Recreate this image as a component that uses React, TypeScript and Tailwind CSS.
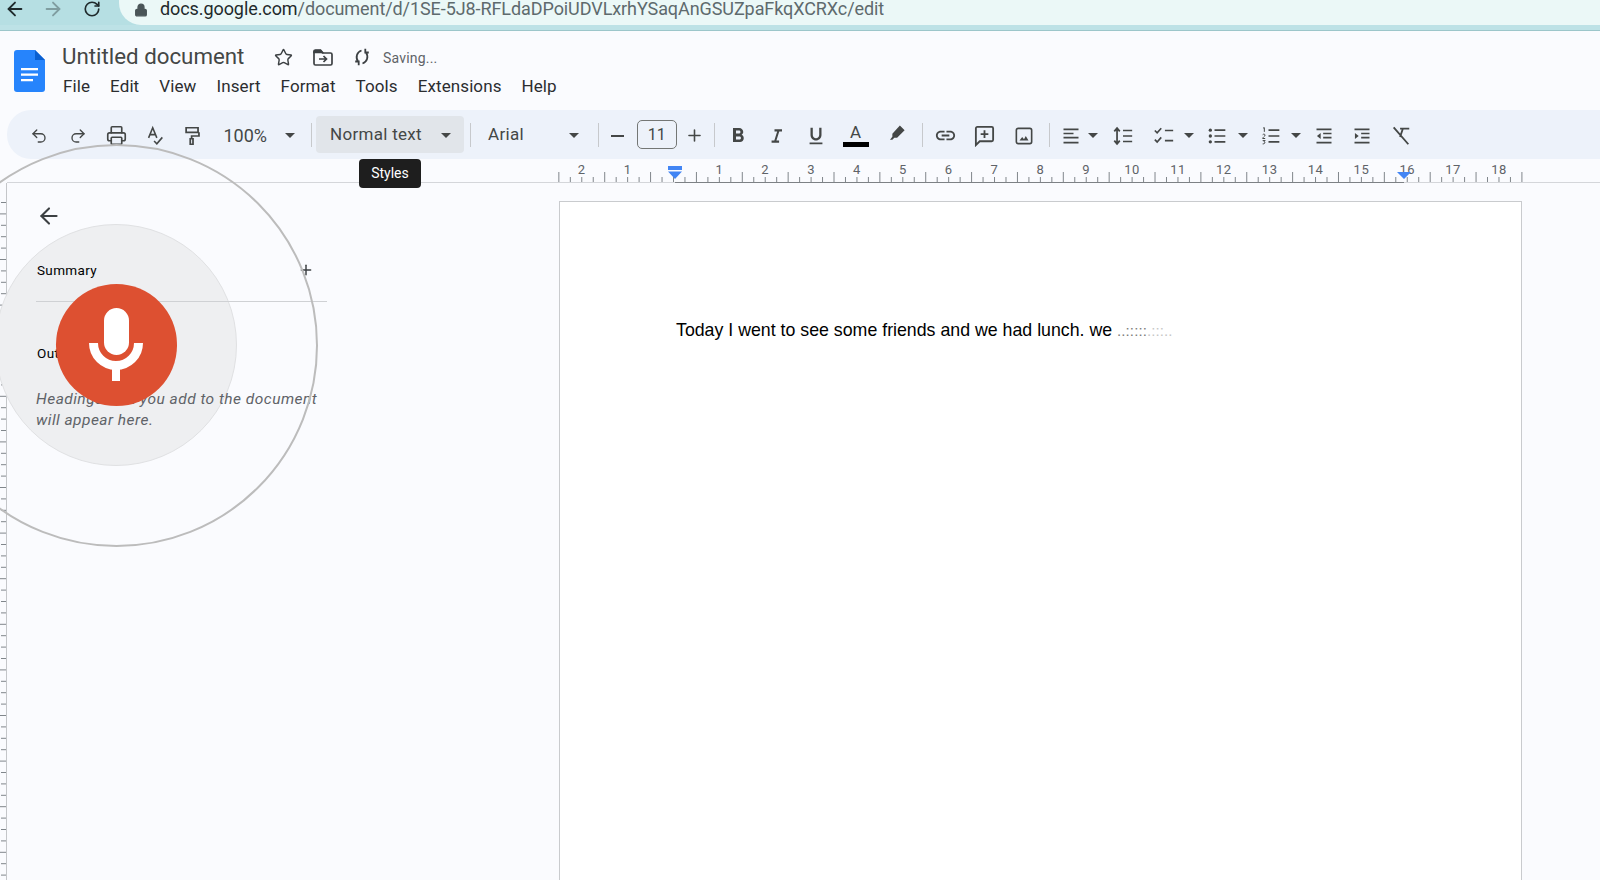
import { ArrowLeft, ArrowRight, Lock, Plus, Printer, Redo2, RotateCw, Star, Undo2 } from "lucide-react";
import type { ReactNode } from "react";

const ZERO = 673.5;
const INCH = 45.86;
const rulerNumbers = [-2, -1, 1, 2, 3, 4, 5, 6, 7, 8, 9, 10, 11, 12, 13, 14, 15, 16, 17, 18];
const rulerTicks = Array.from({ length: 85 }, (_, i) => i);
const sideTicks = Array.from({ length: 62 }, (_, i) => i);
const menu = ["File", "Edit", "View", "Insert", "Format", "Tools", "Extensions", "Help"];

const Cell = ({ className, children }: { className: string; children: ReactNode }) => (
  <span className={`flex shrink-0 translate-y-px items-center justify-center ${className}`}>{children}</span>
);

const Caret = () => (
  <svg width="10" height="5" viewBox="0 0 10 5" className="text-[#444746]">
    <path d="M0 0h10L5 5z" fill="currentColor" />
  </svg>
);

const Sep = ({ className }: { className: string }) => <span className={`h-[24px] w-px shrink-0 bg-[#c7c9cc] ${className}`} />;

const Icon = ({ size = 20, children }: { size?: number; children: ReactNode }) => (
  <svg width={size} height={size} viewBox="0 0 24 24" fill="none" stroke="#444746" strokeWidth="2" className="block">
    {children}
  </svg>
);

const DocsLogo = () => (
  <svg width="31" height="42" viewBox="0 0 31 42" className="block">
    <path d="M3 0h18l10 10v29a3 3 0 0 1-3 3H3a3 3 0 0 1-3-3V3a3 3 0 0 1 3-3z" fill="#2684fc" />
    <path d="M21 0l10 10H21z" fill="#0a5fd0" />
    <path d="M7 18h17v2.2H7zM7 23.5h17v2.2H7zM7 29h12v2.2H7z" fill="#fff" />
  </svg>
);

const Ruler = () => (
  <svg width="1600" height="24" className="block shrink-0">
    <line x1="7" y1="23.5" x2="1600" y2="23.5" stroke="#d4d6da" />
    <line x1="675" y1="23.5" x2="1404" y2="23.5" stroke="#7d8185" />
    {rulerTicks.map((i) => {
      const x = ZERO + (i / 4 - 2.5) * INCH;
      const long = i % 4 === 0;
      return <line key={i} x1={x} x2={x} y1={long ? 13 : 18} y2="23" stroke="#80868b" />;
    })}
    {rulerNumbers.map((n) => (
      <text key={n} x={ZERO + n * INCH} y="15" textAnchor="middle" fontSize="13" letterSpacing="0.5" fill="#5f6368" fontFamily="Roboto, sans-serif" stroke="#fafbfe" strokeWidth="2" paintOrder="stroke">
        {Math.abs(n)}
      </text>
    ))}
    <path d="M668 7h14v4h-14zM668 12.5h14L675 20zM1397 13h14l-7 7z" fill="#4285f4" />
  </svg>
);

const SideRuler = () => (
  <svg width="7" height="697" className="block shrink-0">
    <line x1="6.5" y1="0" x2="6.5" y2="697" stroke="#c4c6c9" />
    {sideTicks.map((i) => (
      <line key={i} x1={i % 4 === 1 ? 0 : 1} x2="6" y1={19.5 + i * 11.4} y2={19.5 + i * 11.4} stroke="#80868b" />
    ))}
  </svg>
);

export default function App() {
  return (
    <div className="relative flex h-[880px] w-[1600px] flex-col overflow-hidden bg-[#fafbfe] font-['Roboto',sans-serif] text-[#3c4043]">
      {/* Browser bar */}
      <div className="h-[31px] shrink-0 border-b border-[#9cc6ca] bg-[#bde2e6]">
        <div className="flex h-[25px] items-center bg-[#b6dfe3]">
          <ArrowLeft size={22} strokeWidth={2} className="ml-[4px] shrink-0 -translate-y-[4px] text-[#1f2a2c]" />
          <ArrowRight size={22} strokeWidth={2} className="ml-[16px] shrink-0 -translate-y-[4px] text-[#7f9da0]" />
          <RotateCw size={18} strokeWidth={2.2} className="ml-[19px] shrink-0 -translate-y-[4px] text-[#1f2a2c]" />
          <div className="ml-[18px] flex h-[25px] flex-1 items-center rounded-bl-[22px] bg-[#ebf8f7] pl-[15px]">
            <Lock size={14} fill="#4a5558" strokeWidth={2.4} className="shrink-0 -translate-y-[3px] text-[#4a5558]" />
            <span className="ml-[12px] -translate-y-[4px] whitespace-nowrap text-[18px] leading-[16px] tracking-[-0.08px] text-[#5e6a6d]">
              <span className="text-[#1f2a2c]">docs.google.com</span>/document/d/1SE-5J8-RFLdaDPoiUDVLxrhYSaqAnGSUZpaFkqXCRXc/edit
            </span>
          </div>
        </div>
      </div>

      {/* Title and menu */}
      <div className="flex h-[79px] shrink-0">
        <div className="ml-[14px] mt-[19px]">
          <DocsLogo />
        </div>
        <div className="ml-[17px]">
          <div className="mt-[14px] flex h-[24px] items-center">
            <span className="w-[183px] -translate-y-px whitespace-nowrap text-[22.3px] leading-[24px] text-[#444746]">Untitled document</span>
            <Star size={19} strokeWidth={1.8} className="ml-[29px] shrink-0 text-[#3c4043]" />
            <span className="ml-[20px] shrink-0">
              <svg width="20" height="17" viewBox="0 0 20 17" fill="none" stroke="#3c4043" strokeWidth="1.7" className="block">
                <path d="M1 2.500A1.500 1.500 0 0 1 2.500 1h5L9.500 3.500H1z" fill="#3c4043" />
                <path d="M1 3a1.500 1.500 0 0 1 1.500-1.500h5L9.500 4H17.500A1.500 1.500 0 0 1 19 5.500v9a1.500 1.500 0 0 1-1.500 1.500h-15A1.500 1.500 0 0 1 1 14.500z" />
                <path d="M6 10h7M10.500 7l3 3-3 3" />
              </svg>
            </span>
            <span className="ml-[21px] shrink-0">
              <svg width="16" height="18" viewBox="0 0 16 18" fill="none" stroke="#3c4043" strokeWidth="1.8" className="block">
                <path d="M7.500 2.500C3 4 1 9 4.200 14M1.200 13.500h3.500v3.800" />
                <path d="M8.500 15.500C13 14 15 9 11.800 4M14.800 4.500h-3.500V.7" />
              </svg>
            </span>
            <span className="ml-[13px] translate-y-px text-[14px] tracking-[0.2px] text-[#5f6368]">Saving...</span>
          </div>
          <div className="mt-[6px] flex h-[24px] items-center gap-[20px] pl-[1px] text-[17px] tracking-[0.1px] text-[#2b2d30]">
            {menu.map((m) => (
              <span key={m}>{m}</span>
            ))}
          </div>
        </div>
      </div>

      {/* Toolbar */}
      <div className="ml-[7px] flex h-[49px] shrink-0 items-center rounded-l-[24px] bg-[#edf2fa] pl-[13px] text-[#444746]">
        <Cell className="w-[38.5px]"><Undo2 size={18} strokeWidth={1.8} /></Cell>
        <Cell className="w-[38.5px]"><Redo2 size={18} strokeWidth={1.8} /></Cell>
        <Cell className="w-[38.5px]"><Printer size={21} strokeWidth={1.9} /></Cell>
        <Cell className="w-[38.5px]">
          <Icon size={22}>
            <path d="M5 14 9.500 3 14 14M6.500 10.500h6M11 17.500l3 3 6-7" strokeWidth="1.700" />
          </Icon>
        </Cell>
        <Cell className="w-[38.5px]">
          <Icon size={22}>
            <path d="M6 3h13v5H6zM12 8h8M20 8v4h-8v3M10.500 15h3v6h-3z" transform="translate(-1.500 0)" strokeWidth="1.900" />
          </Icon>
        </Cell>
        <span className="ml-[11px] w-[56.5px] shrink-0 translate-y-px text-[18px]">100%</span>
        <Cell className="w-[20px]"><Caret /></Cell>
        <Sep className="ml-[11px]" />
        <div className="ml-[4px] flex h-[37px] w-[148px] shrink-0 items-center rounded-[4px] bg-[#e1e5ea] pl-[14px] text-[17px] tracking-[0.3px]">
          <span className="w-[106px]">Normal text</span>
          <Cell className="w-[20px]"><Caret /></Cell>
        </div>
        <Sep className="ml-[6px]" />
        <span className="ml-[17px] w-[76px] shrink-0 text-[17px] tracking-[0.3px]">Arial</span>
        <Cell className="w-[20px]"><Caret /></Cell>
        <Sep className="ml-[14px]" />
        <Cell className="ml-[8px] w-[20px]"><span className="h-[2px] w-[13px] bg-[#444746]" /></Cell>
        <span className="ml-[9.5px] flex h-[29px] w-[40.5px] shrink-0 items-center justify-center rounded-[5px] border border-[#747775] text-[16px]">11</span>
        <Cell className="ml-[7px] w-[20px]"><Plus size={19} strokeWidth={2} /></Cell>
        <Sep className="ml-[10px]" />
        <Cell className="ml-[4px] w-[38.5px]">
          <svg width="24" height="24" viewBox="0 0 24 24" fill="#444746"><path d="M15.600 10.790c.97-.67 1.650-1.770 1.650-2.790 0-2.260-1.750-4-4-4H7v14h7.040c2.090 0 3.710-1.700 3.710-3.790 0-1.520-.86-2.820-2.150-3.420zM10 6.500h3c.83 0 1.500.67 1.500 1.500s-.67 1.500-1.500 1.500h-3v-3zm3.500 9H10v-3h3.500c.83 0 1.500.67 1.500 1.500s-.67 1.500-1.500 1.500z" /></svg>
        </Cell>
        <Cell className="w-[39px]">
          <svg width="20" height="24" viewBox="0 0 24 24" fill="#444746"><path d="M9 4v2.500h3.200L8.800 17.500H5.500V20h9v-2.500h-3.200l3.400-11H18V4z" /></svg>
        </Cell>
        <Cell className="w-[39px]">
          <svg width="22" height="22" viewBox="0 0 24 24" fill="#444746"><path d="M12 17c3.310 0 6-2.690 6-6V3h-2.500v8c0 1.930-1.570 3.500-3.500 3.500S8.500 12.930 8.500 11V3H6v8c0 3.310 2.690 6 6 6zm-7 2v2h14v-2H5z" /></svg>
        </Cell>
        <Cell className="w-[40px]">
          <span className="flex w-[26px] flex-col items-center">
            <span className="text-[17px] leading-[17px] text-[#444746]">A</span>
            <span className="mt-[1px] h-[5px] w-[26px] bg-black" />
          </span>
        </Cell>
        <Cell className="ml-[2px] w-[39px]">
          <svg width="19" height="19" viewBox="0 0 24 24" className="block -translate-y-[3px]"><path d="M15 3l6 6-9.500 9.500H8L5.500 21H2.500l3-3.500V13.500z" fill="#444746" /></svg>
        </Cell>
        <Sep className="ml-[5px]" />
        <Cell className="ml-[4px] w-[38.5px]">
          <svg width="23" height="23" viewBox="0 0 24 24" fill="#444746"><path d="M3.900 12c0-1.710 1.390-3.100 3.100-3.100h4V7H7c-2.760 0-5 2.240-5 5s2.240 5 5 5h4v-1.900H7c-1.710 0-3.100-1.390-3.100-3.100zM8 13h8v-2H8v2zm9-6h-4v1.900h4c1.710 0 3.100 1.390 3.100 3.100s-1.390 3.100-3.100 3.100h-4V17h4c2.760 0 5-2.240 5-5s-2.240-5-5-5z" /></svg>
        </Cell>
        <Cell className="w-[39px]">
          <Icon size={23}>
            <path d="M3 4.500A1.500 1.500 0 0 1 4.500 3h15A1.500 1.500 0 0 1 21 4.500v12a1.500 1.500 0 0 1-1.500 1.500H7l-4 4zM12 6.500v8M8 10.500h8" strokeWidth="1.900" />
          </Icon>
        </Cell>
        <Cell className="w-[39px]">
          <svg width="18" height="18" viewBox="0 0 20 20" className="block">
            <rect x="1.500" y="1.500" width="17" height="17" rx="2" fill="none" stroke="#444746" strokeWidth="1.800" />
            <path d="M5 15l3-4 2 2.500 2-3.500 3 5z" fill="#444746" />
          </svg>
        </Cell>
        <Sep className="ml-[6px]" />
        <Cell className="ml-[8px] w-[26px]">
          <Icon size={20}><path d="M3 4h18M3 9h12M3 14h18M3 20h18" strokeWidth="2" /></Icon>
        </Cell>
        <Cell className="w-[18px]"><Caret /></Cell>
        <Cell className="ml-[2px] w-[38px]">
          <Icon size={22}>
            <path d="M5.500 4v16M2.500 7l3-3.500 3 3.500M2.500 17l3 3.500 3-3.500M12 6h10M12 12h10M12 18h10" strokeWidth="1.900" />
          </Icon>
        </Cell>
        <Cell className="ml-[8px] w-[28px]">
          <Icon size={22}>
            <path d="M2 6l2.500 2.500L9 3.500M2 16l2.500 2.500L9 13.500M13 6h9M13 17h9" strokeWidth="1.800" />
          </Icon>
        </Cell>
        <Cell className="w-[22px]"><Caret /></Cell>
        <Cell className="ml-[3px] w-[28px]">
          <svg width="20" height="20" viewBox="0 0 24 24" className="block">
            <circle cx="4" cy="5" r="2" fill="#444746" />
            <circle cx="4" cy="12" r="2" fill="#444746" />
            <circle cx="4" cy="19" r="2" fill="#444746" />
            <path d="M9 5h13M9 12h13M9 19h13" stroke="#444746" strokeWidth="2" />
          </svg>
        </Cell>
        <Cell className="w-[24px]"><Caret /></Cell>
        <Cell className="ml-[2px] w-[28px]">
          <svg width="20" height="20" viewBox="0 0 24 24" className="block">
            <path d="M2.500 2.500 4 2v5M2 10.500c1-1.200 3-.8 2.800.6C4.600 12.500 2.500 13 2 15h3M2 17.500h3l-1.500 1.500c1.500 0 2 2.500-1.500 2.500" fill="none" stroke="#444746" strokeWidth="1.200" />
            <path d="M9 5h13M9 12h13M9 19h13" stroke="#444746" strokeWidth="2" />
          </svg>
        </Cell>
        <Cell className="w-[22px]"><Caret /></Cell>
        <Cell className="w-[34px]">
          <Icon size={20}>
            <path d="M3 4h18M11 9h10M11 14h10M3 20h18" strokeWidth="2" />
            <path d="M8 8.500v7L3.500 12z" fill="#444746" stroke="none" />
          </Icon>
        </Cell>
        <Cell className="ml-[2px] w-[38px]">
          <Icon size={20}>
            <path d="M3 4h18M11 9h10M11 14h10M3 20h18" strokeWidth="2" />
            <path d="M3.500 8.500v7L8 12z" fill="#444746" stroke="none" />
          </Icon>
        </Cell>
        <Cell className="ml-[1px] w-[38px]">
          <Icon size={22}>
            <path d="M4 2.500 20 21M11 4h10M14 4l-3 9" strokeWidth="2" />
          </Icon>
        </Cell>
      </div>

      <Ruler />

      {/* Outline panel and page */}
      <div className="flex min-h-0 flex-1">
        <SideRuler />
        <div className="relative z-10 w-[552px] shrink-0 pl-[29px]">
          <ArrowLeft size={26} strokeWidth={1.9} className="mt-[20px] text-[#3c4043]" />
          <div className="mt-[31px] flex h-[20px] w-[291px] items-center justify-between pl-[1px] pr-[13px]">
            <span className="text-[13.5px] tracking-[0.35px] text-black">Summary</span>
            <Plus size={16} strokeWidth={2.2} className="text-[#3c4043]" />
          </div>
          <div className="mt-[21px] h-px w-[291px] bg-[#cfd1d4]" />
          <div className="mt-[41px] pl-[1px] text-[13.5px] tracking-[0.35px] text-black">Outline</div>
          <p className="mt-[26px] w-[292px] text-[15.5px] italic leading-[20.5px] tracking-[0.47px] text-[#5f6368]">
            Headings that you add to the document will appear here.
          </p>
        </div>
        <div className="mt-[18px] h-[700px] w-[963px] shrink-0 border border-[#c9cbce] bg-white pl-[116px] pt-[117px] font-['Liberation_Sans',sans-serif] text-[17.75px] leading-[22px] text-black">
          <p className="whitespace-nowrap">
            Today I went to see some friends and we had lunch. we{" "}
            <span className="text-[15px] tracking-[0.1px] text-[#7b7b7b]">..:::::</span>
            <span className="text-[15px] tracking-[0.1px] text-[#c6c6c6]">.:::..</span>
          </p>
        </div>
      </div>

      {/* Tooltip */}
      <div className="absolute left-[359px] top-[159px] z-30 flex h-[29px] w-[62px] items-center justify-center rounded-[4px] bg-[#1e1e1e] text-[14px] text-white">
        Styles
      </div>

      {/* Mic click highlight */}
      <div className="absolute left-[-5px] top-[224px] z-0 h-[242px] w-[242px] rounded-full border border-[#e0e1e3] bg-[#eeeff1]" />
      <div className="absolute left-[-85px] top-[144px] z-20 h-[403px] w-[403px] rounded-full border-[2.5px] border-[#bcbcbc]" />
      <div className="absolute left-[56px] top-[284px] z-20 h-[122px] w-[121px] rounded-full bg-[#dd5031]">
        <svg width="121" height="122" viewBox="0 0 121 122" className="block">
          <rect x="48" y="24" width="25" height="47" rx="12.500" fill="#fff" />
          <path d="M37.500 59a22.500 22.500 0 0 0 45 0" fill="none" stroke="#fff" strokeWidth="9" />
          <rect x="56" y="84" width="8" height="13" fill="#fff" />
        </svg>
      </div>
    </div>
  );
}
